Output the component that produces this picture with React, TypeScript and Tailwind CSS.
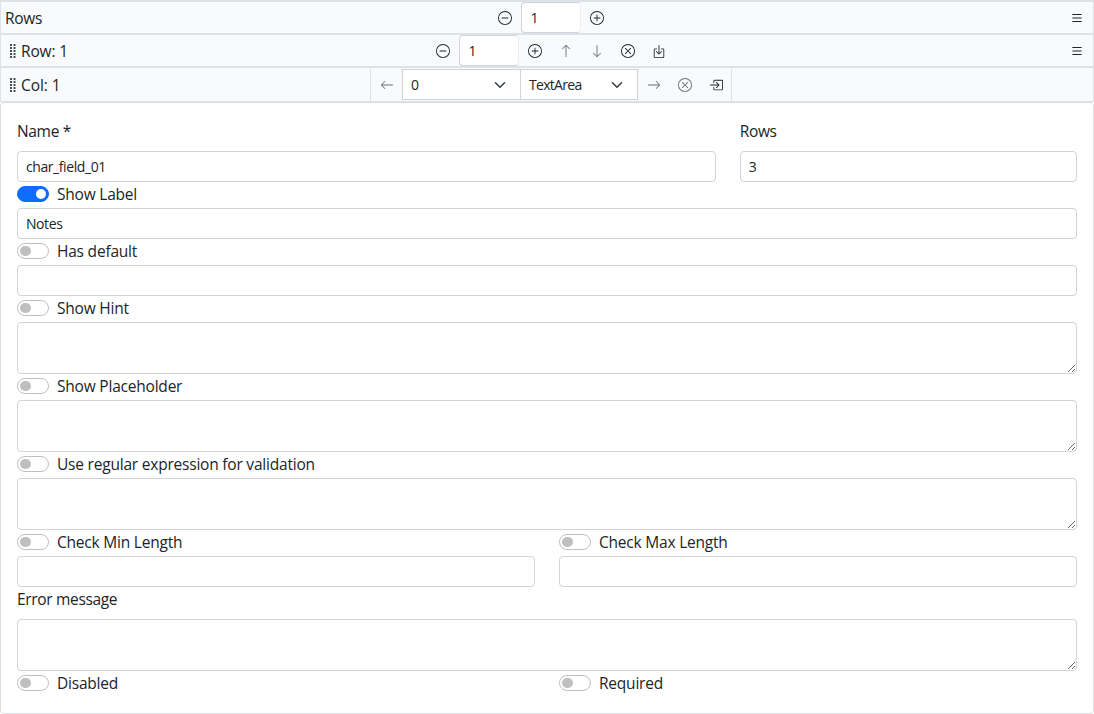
import React from 'react';
import {
  BsArrowDown,
  BsArrowLeft,
  BsArrowRight,
  BsArrowUp,
  BsBoxArrowInDown,
  BsBoxArrowInRight,
  BsDashCircle,
  BsList,
  BsPlusCircle,
  BsXCircle,
} from 'react-icons/bs';

function IconButton({ children, muted = false, label }: { children: React.ReactNode; muted?: boolean; label: string }) {
  return (
    <button
      type="button"
      aria-label={label}
      className={`flex h-[31px] w-[31px] shrink-0 items-center justify-center text-sm ${muted ? 'text-[#212529]/65' : 'text-[#212529]'}`}
    >
      {children}
    </button>
  );
}

function Grip() {
  return (
    <svg width="6" height="14" viewBox="0 0 6 14" fill="#4a4e52" className="shrink-0">
      {[0, 3, 6, 9, 12].map((y) => (
        <g key={y}>
          <rect x="0" y={y} width="2" height="2" />
          <rect x="3.5" y={y} width="2" height="2" />
        </g>
      ))}
    </svg>
  );
}

function CountInput() {
  return (
    <input
      defaultValue="1"
      className="mr-px h-[31px] w-[60px] shrink-0 rounded-sm border border-[#ced4da] border-r-[#eceef0] bg-white pl-[9px] pr-2 text-sm outline-none"
    />
  );
}

function Select({ value, className }: { value: string; className: string }) {
  return (
    <button
      type="button"
      className={`flex h-[31px] shrink-0 items-center justify-between border border-[#ced4da] bg-white pl-2 text-left text-sm ${className}`}
    >
      <span className="tracking-[-0.7px]">{value}</span>
      <svg width="16" height="12" viewBox="0 0 16 16" fill="none" stroke="#343a40" strokeWidth="2" strokeLinecap="round" strokeLinejoin="round">
        <path d="m2 5 6 6 6-6" />
      </svg>
    </button>
  );
}

function Input({ value = '' }: { value?: string }) {
  return (
    <input
      defaultValue={value}
      className="block h-[31px] w-full rounded-sm border border-[#ced4da] bg-white px-2 text-sm tracking-[-0.42px] outline-none"
    />
  );
}

function TextArea() {
  return <textarea className="block h-[52px] w-full resize-y rounded-sm border border-[#ced4da] bg-white px-2 py-1 text-sm outline-none" />;
}

function Toggle({ label, on = false }: { label: string; on?: boolean }) {
  return (
    <label className="flex h-[26px] gap-2">
      <span
        className={`mt-1 flex h-4 w-8 shrink-0 items-center rounded-full border ${
          on ? 'justify-end border-[#0d6efd] bg-[#0d6efd] pr-0.5' : 'border-[#bfbfbf] bg-white pl-0.5'
        }`}
      >
        <span className={`size-[10.5px] rounded-full ${on ? 'bg-white' : 'bg-[#bfbfbf]'}`} />
      </span>
      <span className="leading-[25px] tracking-[-0.21px]">{label}</span>
    </label>
  );
}

export default function App() {
  return (
    <div className="flex h-[714px] w-[1094px] flex-col bg-white font-['Open_Sans','Noto_Sans',sans-serif] text-[15.5px] tracking-[-0.33px] text-[#212529]">
      <header className="grid h-[35px] grid-cols-[1fr_auto_1fr] items-center border-x border-y-2 border-[#dee2e6] bg-[#f8fafb] pl-1 pr-px">
        <span className="leading-6">Rows</span>
        <div className="-mr-[5px] flex">
          <IconButton label="Remove row"><BsDashCircle /></IconButton>
          <CountInput />
          <IconButton label="Add row"><BsPlusCircle /></IconButton>
        </div>
        <div className="flex justify-end">
          <IconButton label="Menu"><BsList /></IconButton>
        </div>
      </header>
      <div className="grid h-[33px] grid-cols-[1fr_auto_1fr] items-center border-x border-b-2 border-[#dee2e6] bg-[#f8fafb] pl-[9px] pr-px">
        <div className="flex items-center gap-[5px]">
          <Grip />
          <span className="leading-6 tracking-[-0.15px]">Row: 1</span>
        </div>
        <div className="flex">
          <IconButton label="Remove column"><BsDashCircle /></IconButton>
          <CountInput />
          <IconButton label="Add column"><BsPlusCircle /></IconButton>
          <IconButton label="Move up" muted><BsArrowUp /></IconButton>
          <IconButton label="Move down" muted><BsArrowDown /></IconButton>
          <IconButton label="Delete"><BsXCircle /></IconButton>
          <IconButton label="Insert below"><BsBoxArrowInDown /></IconButton>
        </div>
        <div className="flex justify-end">
          <IconButton label="Menu"><BsList /></IconButton>
        </div>
      </div>
      <div className="grid h-[34px] grid-cols-[1fr_362px_1fr] items-center border-x border-b border-[#dee2e6] bg-[#f8fafb] pl-[9px] pr-[9px]">
        <div className="flex items-center gap-[5px]">
          <Grip />
          <span className="leading-6 tracking-[-0.05px]">Col: 1</span>
        </div>
        <div className="ml-1 flex h-[33px] w-[362px] items-center border-x border-[#dee2e6]">
          <IconButton label="Move left" muted><BsArrowLeft /></IconButton>
          <Select value="0" className="w-[119px] pr-3" />
          <Select value="TextArea" className="-ml-px w-[118px] pr-3" />
          <div className="flex">
            <IconButton label="Move right" muted><BsArrowRight /></IconButton>
            <IconButton label="Delete" muted><BsXCircle /></IconButton>
            <IconButton label="Insert right"><BsBoxArrowInRight /></IconButton>
          </div>
        </div>
      </div>
      <main className="h-[612px] rounded-sm border border-[#dcdddf] bg-white p-4">
        <div className="grid grid-cols-12 gap-x-6">
          <label className="col-span-8">
            <span className="mb-2 block leading-6">Name *</span>
            <Input value="char_field_01" />
          </label>
          <label className="col-span-4">
            <span className="mb-2 block leading-6">Rows</span>
            <Input value="3" />
          </label>
        </div>
        <Toggle label="Show Label" on />
        <Input value="Notes" />
        <Toggle label="Has default" />
        <Input />
        <Toggle label="Show Hint" />
        <TextArea />
        <Toggle label="Show Placeholder" />
        <TextArea />
        <Toggle label="Use regular expression for validation" />
        <TextArea />
        <div className="grid grid-cols-2 gap-x-6">
          <div>
            <Toggle label="Check Min Length" />
            <Input />
          </div>
          <div>
            <Toggle label="Check Max Length" />
            <Input />
          </div>
        </div>
        <label className="block">
          <span className="mb-2 block leading-6">Error message</span>
          <TextArea />
        </label>
        <div className="grid grid-cols-2 gap-x-6">
          <Toggle label="Disabled" />
          <Toggle label="Required" />
        </div>
      </main>
    </div>
  );
}
